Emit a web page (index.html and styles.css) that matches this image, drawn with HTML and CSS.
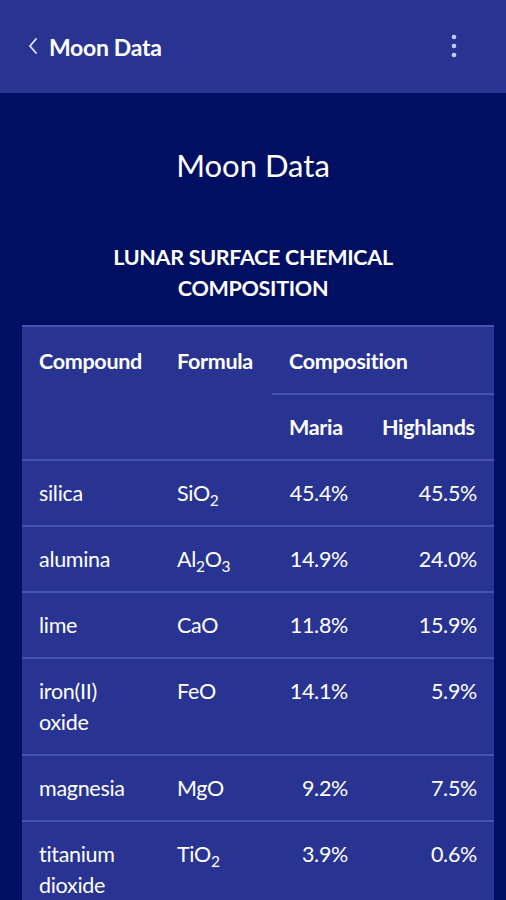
FILE: index.html
```html
<!DOCTYPE html>
<html lang="en">
<head>
<meta charset="utf-8">
<title>Moon Data</title>
<link rel="stylesheet" href="styles.css">
</head>
<body>
<header class="appbar">
  <div class="appbar-left">
    <svg class="back" width="12" height="18" viewBox="0 0 12 18"><path d="M9 2 L3 9 L9 16" fill="none" stroke="#e8eaf6" stroke-width="1.8" stroke-linecap="round" stroke-linejoin="round"/></svg>
    <span class="appbar-title">Moon Data</span>
  </div>
  <svg class="kebab" width="8" height="24" viewBox="0 0 8 24"><circle cx="4" cy="3" r="2.3" fill="#c5cae9"/><circle cx="4" cy="12" r="2.3" fill="#c5cae9"/><circle cx="4" cy="21" r="2.3" fill="#c5cae9"/></svg>
</header>
<main class="content">
  <h1 class="page-title">Moon Data</h1>
  <h2 class="caption">LUNAR SURFACE CHEMICAL COMPOSITION</h2>
  <table class="data">
    <colgroup>
      <col class="c1"><col class="c2"><col class="c3"><col class="c4">
    </colgroup>
    <thead>
      <tr class="h1row">
        <th rowspan="2">Compound</th>
        <th rowspan="2">Formula</th>
        <th colspan="2" class="comp">Composition</th>
      </tr>
      <tr class="h2row">
        <th>Maria</th>
        <th>Highlands</th>
      </tr>
    </thead>
    <tbody>
      <tr><td>silica</td><td>SiO<sub>2</sub></td><td class="num">45.4%</td><td class="num">45.5%</td></tr>
      <tr><td>alumina</td><td>Al<sub>2</sub>O<sub>3</sub></td><td class="num">14.9%</td><td class="num">24.0%</td></tr>
      <tr><td>lime</td><td>CaO</td><td class="num">11.8%</td><td class="num">15.9%</td></tr>
      <tr><td>iron(II) oxide</td><td>FeO</td><td class="num">14.1%</td><td class="num">5.9%</td></tr>
      <tr><td>magnesia</td><td>MgO</td><td class="num">9.2%</td><td class="num">7.5%</td></tr>
      <tr><td>titanium dioxide</td><td>TiO<sub>2</sub></td><td class="num">3.9%</td><td class="num">0.6%</td></tr>
    </tbody>
  </table>
</main>
</body>
</html>
```
FILE: styles.css
```css
* { box-sizing: border-box; }
html, body {
  margin: 0;
  padding: 0;
  background: #010f62;
  font-family: Lato, "Open Sans", sans-serif;
  color: #ffffff;
}
body { height: 900px; overflow: hidden; }

.appbar {
  height: 93px;
  background: #293492;
  display: flex;
  align-items: center;
  justify-content: space-between;
  padding: 0 48px 0 27px;
}
.appbar-left {
  display: flex;
  align-items: center;
  gap: 10px;
}
.back { display: block; margin-top: -1px; }
.appbar-title {
  font-size: 23px;
  font-weight: 700;
  letter-spacing: -0.3px;
}
.kebab { display: block; margin-top: -2px; }

.content {
  display: flex;
  flex-direction: column;
  align-items: center;
}
.page-title {
  margin: 47px 0 0;
  font-size: 31px;
  font-weight: 400;
  line-height: 50px;
}
.caption {
  margin: 52px 0 0;
  max-width: 360px;
  text-align: center;
  font-size: 21.5px;
  font-weight: 700;
  line-height: 31px;
  letter-spacing: -0.3px;
}
.data {
  align-self: flex-start;
  margin: 21px 0 0 22px;
  width: 472px;
  table-layout: fixed;
  border-collapse: collapse;
  background: #293492;
  font-size: 21.5px;
  line-height: 31px;
}
.c1 { width: 138px; }
.c2 { width: 112px; }
.c3 { width: 93px; }
.c4 { width: 129px; }

.data th, .data td {
  padding: 0 16px 0 17px;
  text-align: left;
  vertical-align: top;
}
.data th { font-weight: 700; letter-spacing: -0.3px; }
.data thead tr.h1row th {
  padding-top: 19px;
  padding-bottom: 16px;
  border-top: 2px solid #4753b1;
}
.data thead th.comp { border-bottom: 2px solid #4753b1; }
.data thead tr.h2row th {
  padding-top: 17px;
  padding-bottom: 16px;
}
.data thead tr.h2row { border-bottom: 2px solid #4753b1; }
.data tbody td {
  padding-top: 17px;
  padding-bottom: 16px;
  letter-spacing: -0.3px;
}
.data tbody tr { border-bottom: 2px solid #4753b1; }
.data td.num { text-align: right; padding-right: 17px; padding-left: 8px; }
.data sub { font-size: 0.72em; line-height: 0; vertical-align: -0.35em; }
```
